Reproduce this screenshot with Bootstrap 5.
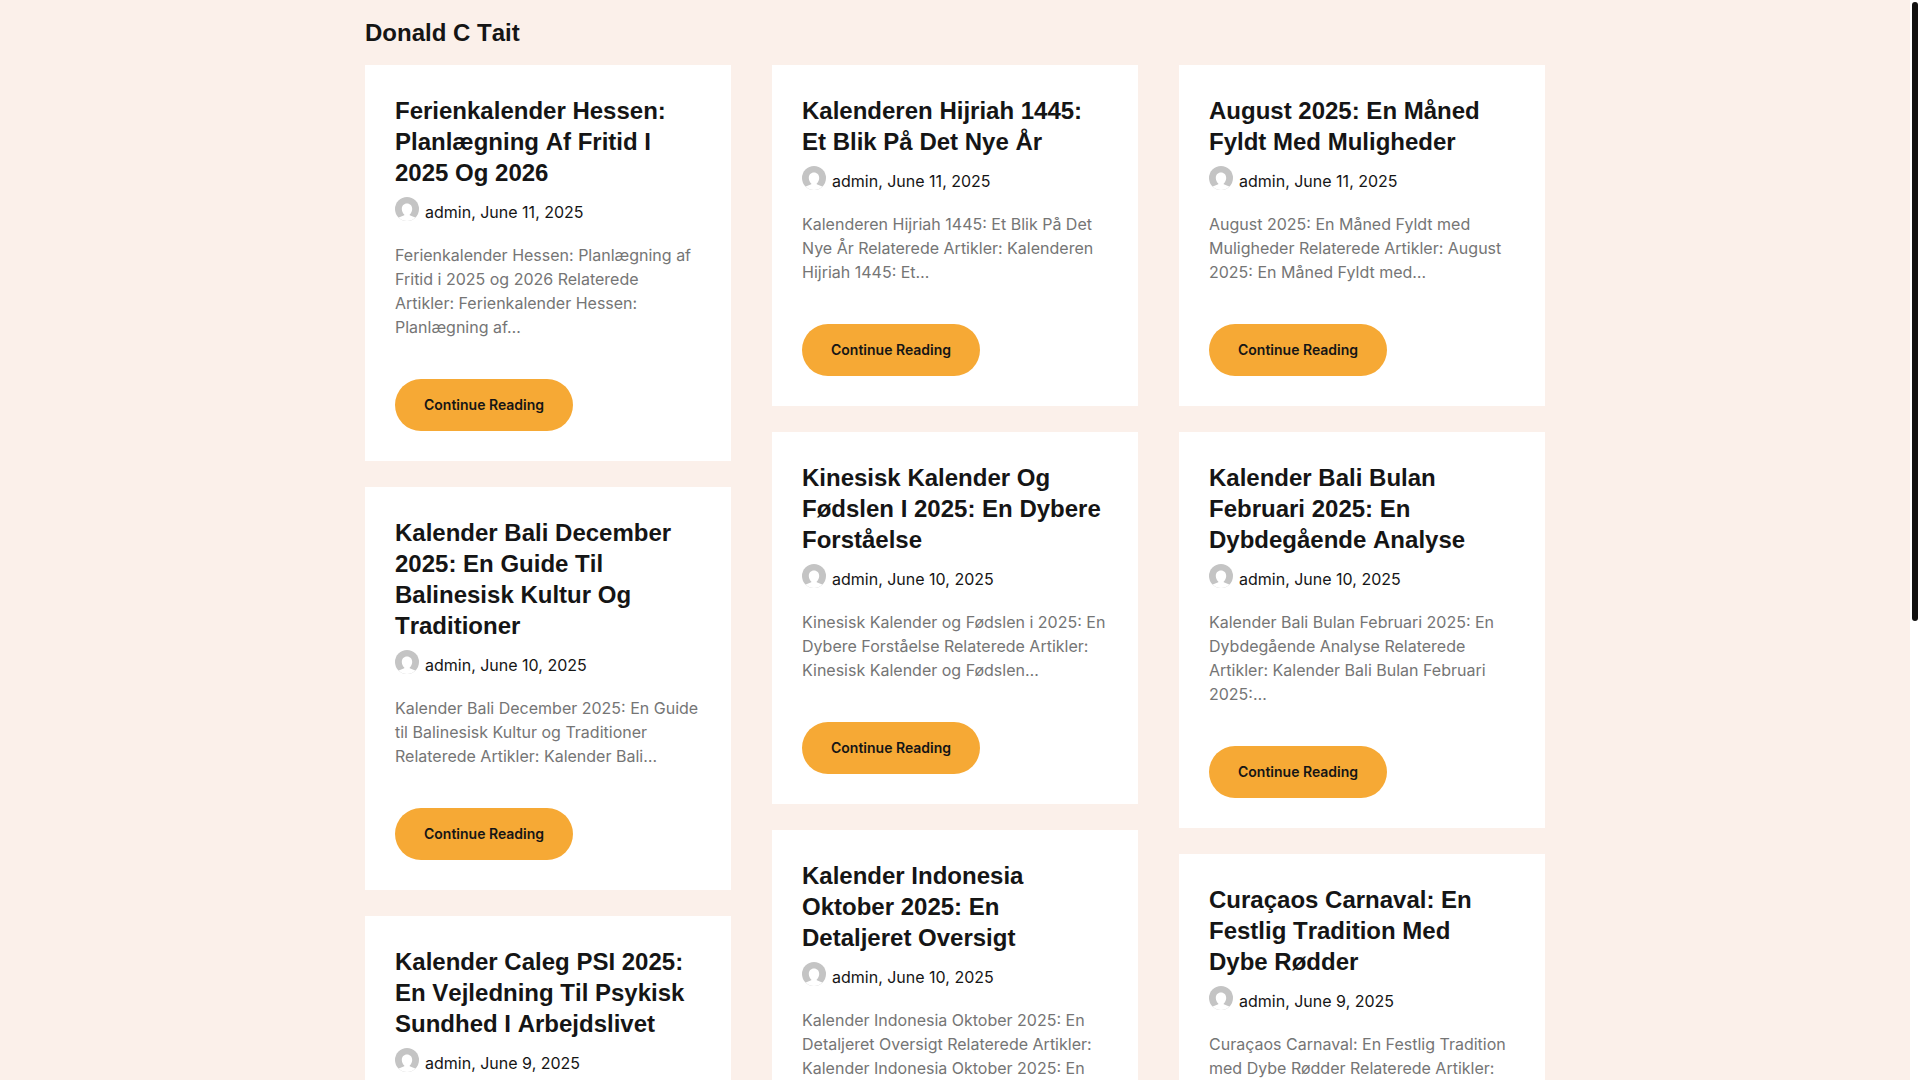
<!DOCTYPE html>
<html lang="da">
<head>
<meta charset="utf-8">
<meta name="viewport" content="width=device-width, initial-scale=1">
<title>Donald C Tait</title>
<link href="https://cdn.jsdelivr.net/npm/bootstrap@5.3.0/dist/css/bootstrap.min.css" rel="stylesheet">
<style>
  body { background: #fbf0ea; color: #151515; font-family: Inter, sans-serif; font-size: 16px; line-height: 24px; }
  .page-scroll { height: 100vh; padding-right: 10px; }
  .site-wrap { max-width: 1180px; }
  .site-name, .post-title { font-family: "Liberation Sans", Arial, sans-serif; font-size: 24px; line-height: 31px; font-weight: 700; font-kerning: none; }
  .site-name { padding: 17px 0; }
  .post-grid { --bs-gutter-x: 41px; }
  .post { background: #fff; padding: 30px; margin-bottom: 26px; }
  .post a { color: inherit; text-decoration: none; }
  .post-meta { gap: 6px; margin: 9px 0 19px; }
  .post-meta span { padding-top: 3px; }
  .post-text { color: #757575; margin-bottom: 40px; }
  .post .btn-more { background: #f6a935; color: #151515; font-size: 14px; font-weight: 600; line-height: 20px; padding: 16px 29px; border: 0; }
  .post .btn-more:hover { background: #e89a22; }
  .scroll-track { width: 10px; background: #fff; padding: 2px; }
  .scroll-thumb { height: 619px; background: #111; border-radius: 3px; }
</style>
<script src="https://cdn.jsdelivr.net/npm/bootstrap@5.3.0/dist/js/bootstrap.bundle.min.js"></script>
</head>
<body>
<svg class="d-none" aria-hidden="true">
  <symbol id="avatar" viewBox="0 0 24 24">
    <rect width="24" height="24" fill="#c4c4c4"/>
    <path fill="#fff" d="M12 6.600c-3.100 0-5.200 2.300-5.200 5.400 0 2.200 1 4.300 2.500 5.500v.700L2.500 21v3h19v-3l-6.800-2.800v-.700c1.500-1.200 2.500-3.300 2.500-5.500 0-3.100-2.100-5.400-5.200-5.400z"/>
  </symbol>
</svg>
<div class="page-scroll overflow-hidden">
  <div class="site-wrap mx-auto">
    <header><h1 class="site-name m-0"><a class="text-reset text-decoration-none" href="#">Donald C Tait</a></h1></header>
    <main class="row post-grid">
      <div class="col-12 col-md-4">
        <article class="post">
          <h2 class="post-title m-0"><a href="#">Ferienkalender Hessen: Planlægning Af Fritid I 2025 Og 2026</a></h2>
          <div class="post-meta d-flex align-items-start"><svg class="rounded-circle" width="24" height="24" aria-hidden="true"><use href="#avatar"/></svg><span><a href="#">admin</a>, <a href="#">June 11, 2025</a></span></div>
          <p class="post-text">Ferienkalender Hessen: Planlægning af Fritid i 2025 og 2026 Relaterede Artikler: Ferienkalender Hessen: Planlægning af…</p>
          <a class="btn btn-more rounded-pill" href="#">Continue Reading</a>
        </article>
        <article class="post">
          <h2 class="post-title m-0"><a href="#">Kalender Bali December 2025: En Guide Til Balinesisk Kultur Og Traditioner</a></h2>
          <div class="post-meta d-flex align-items-start"><svg class="rounded-circle" width="24" height="24" aria-hidden="true"><use href="#avatar"/></svg><span><a href="#">admin</a>, <a href="#">June 10, 2025</a></span></div>
          <p class="post-text">Kalender Bali December 2025: En Guide til Balinesisk Kultur og Traditioner Relaterede Artikler: Kalender Bali…</p>
          <a class="btn btn-more rounded-pill" href="#">Continue Reading</a>
        </article>
        <article class="post">
          <h2 class="post-title m-0"><a href="#">Kalender Caleg PSI 2025: En Vejledning Til Psykisk Sundhed I Arbejdslivet</a></h2>
          <div class="post-meta d-flex align-items-start"><svg class="rounded-circle" width="24" height="24" aria-hidden="true"><use href="#avatar"/></svg><span><a href="#">admin</a>, <a href="#">June 9, 2025</a></span></div>
        </article>
      </div>
      <div class="col-12 col-md-4">
        <article class="post">
          <h2 class="post-title m-0"><a href="#">Kalenderen Hijriah 1445: Et Blik På Det Nye År</a></h2>
          <div class="post-meta d-flex align-items-start"><svg class="rounded-circle" width="24" height="24" aria-hidden="true"><use href="#avatar"/></svg><span><a href="#">admin</a>, <a href="#">June 11, 2025</a></span></div>
          <p class="post-text">Kalenderen Hijriah 1445: Et Blik På Det Nye År Relaterede Artikler: Kalenderen Hijriah 1445: Et…</p>
          <a class="btn btn-more rounded-pill" href="#">Continue Reading</a>
        </article>
        <article class="post">
          <h2 class="post-title m-0"><a href="#">Kinesisk Kalender Og Fødslen I 2025: En Dybere Forståelse</a></h2>
          <div class="post-meta d-flex align-items-start"><svg class="rounded-circle" width="24" height="24" aria-hidden="true"><use href="#avatar"/></svg><span><a href="#">admin</a>, <a href="#">June 10, 2025</a></span></div>
          <p class="post-text">Kinesisk Kalender og Fødslen i 2025: En Dybere Forståelse Relaterede Artikler: Kinesisk Kalender og Fødslen…</p>
          <a class="btn btn-more rounded-pill" href="#">Continue Reading</a>
        </article>
        <article class="post">
          <h2 class="post-title m-0"><a href="#">Kalender Indonesia Oktober 2025: En Detaljeret Oversigt</a></h2>
          <div class="post-meta d-flex align-items-start"><svg class="rounded-circle" width="24" height="24" aria-hidden="true"><use href="#avatar"/></svg><span><a href="#">admin</a>, <a href="#">June 10, 2025</a></span></div>
          <p class="post-text">Kalender Indonesia Oktober 2025: En Detaljeret Oversigt Relaterede Artikler: Kalender Indonesia Oktober 2025: En</p>
        </article>
      </div>
      <div class="col-12 col-md-4">
        <article class="post">
          <h2 class="post-title m-0"><a href="#">August 2025: En Måned Fyldt Med Muligheder</a></h2>
          <div class="post-meta d-flex align-items-start"><svg class="rounded-circle" width="24" height="24" aria-hidden="true"><use href="#avatar"/></svg><span><a href="#">admin</a>, <a href="#">June 11, 2025</a></span></div>
          <p class="post-text">August 2025: En Måned Fyldt med Muligheder Relaterede Artikler: August 2025: En Måned Fyldt med…</p>
          <a class="btn btn-more rounded-pill" href="#">Continue Reading</a>
        </article>
        <article class="post">
          <h2 class="post-title m-0"><a href="#">Kalender Bali Bulan Februari 2025: En Dybdegående Analyse</a></h2>
          <div class="post-meta d-flex align-items-start"><svg class="rounded-circle" width="24" height="24" aria-hidden="true"><use href="#avatar"/></svg><span><a href="#">admin</a>, <a href="#">June 10, 2025</a></span></div>
          <p class="post-text">Kalender Bali Bulan Februari 2025: En Dybdegående Analyse Relaterede Artikler: Kalender Bali Bulan Februari 2025:…</p>
          <a class="btn btn-more rounded-pill" href="#">Continue Reading</a>
        </article>
        <article class="post">
          <h2 class="post-title m-0"><a href="#">Curaçaos Carnaval: En Festlig Tradition Med Dybe&nbsp;Rødder</a></h2>
          <div class="post-meta d-flex align-items-start"><svg class="rounded-circle" width="24" height="24" aria-hidden="true"><use href="#avatar"/></svg><span><a href="#">admin</a>, <a href="#">June 9, 2025</a></span></div>
          <p class="post-text">Curaçaos Carnaval: En Festlig Tradition med Dybe Rødder Relaterede Artikler:</p>
        </article>
      </div>
    </main>
  </div>
</div>
<div class="scroll-track position-fixed top-0 end-0 vh-100" aria-hidden="true"><div class="scroll-thumb"></div></div>
</body>
</html>
